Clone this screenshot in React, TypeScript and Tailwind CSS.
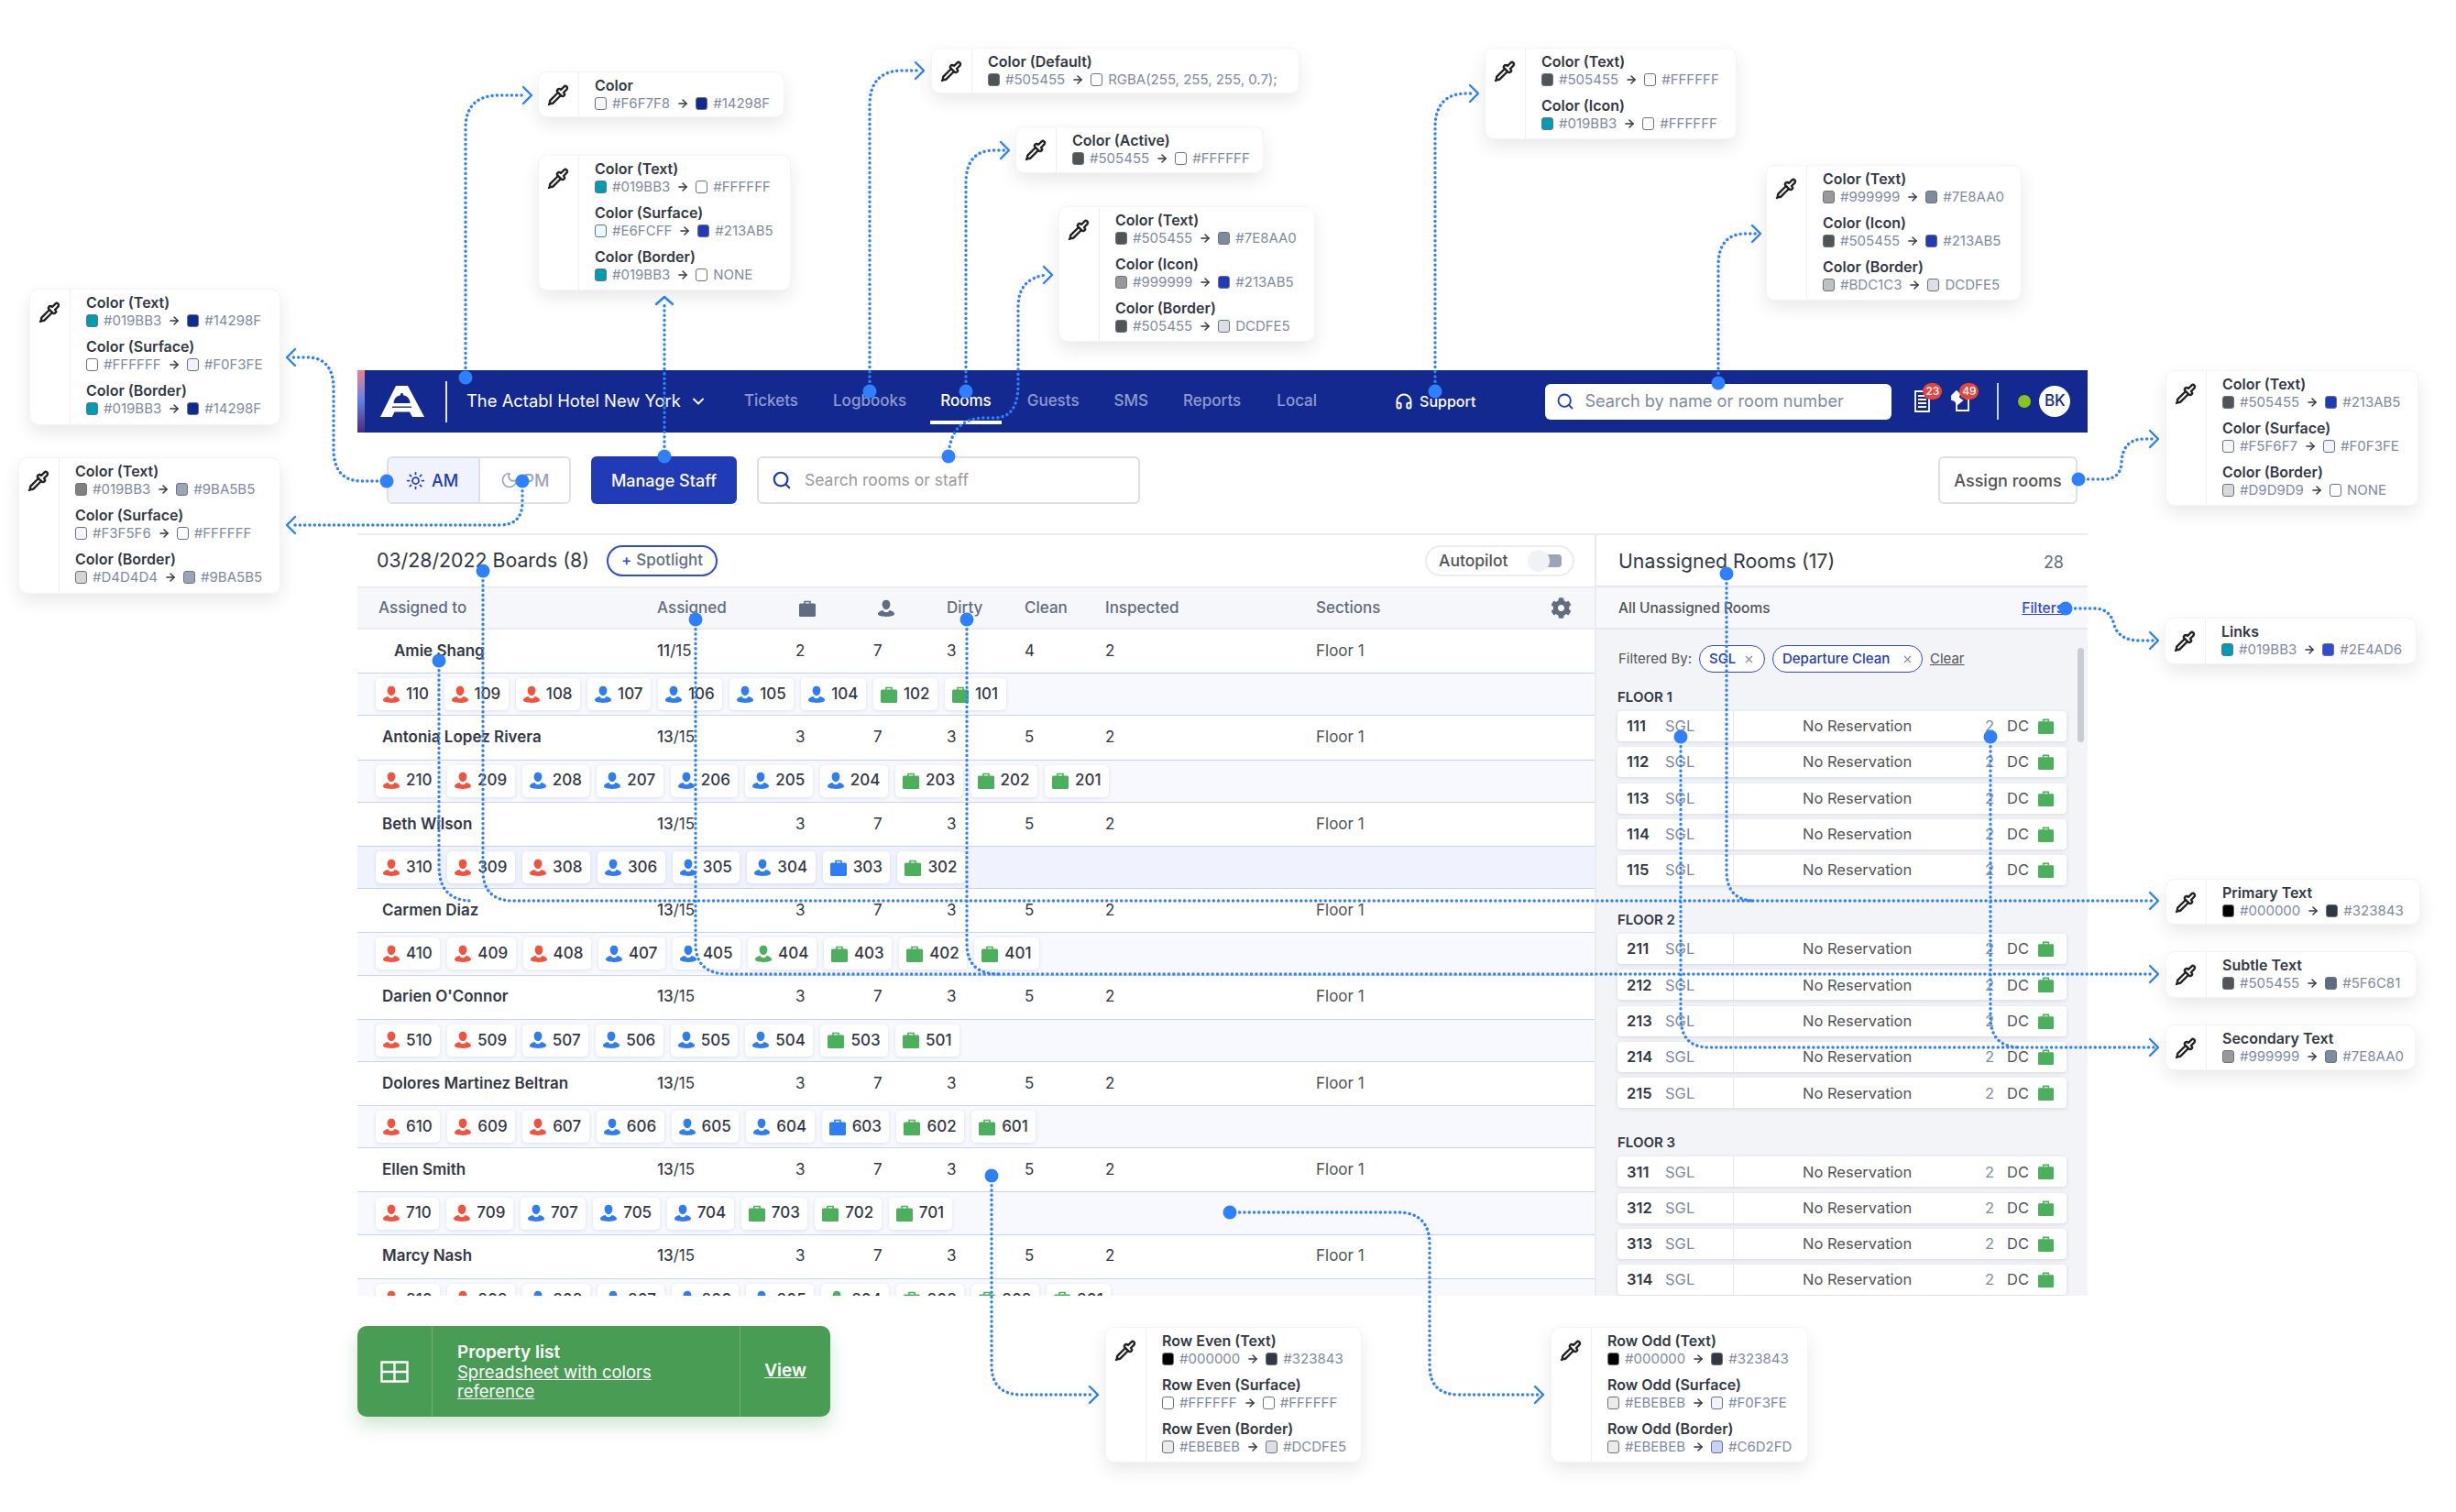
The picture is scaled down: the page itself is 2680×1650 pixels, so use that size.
import React from "react";
import { ArrowRight, Pipette, ChevronDown, Sun, Moon, Search, Headphones, X } from "lucide-react";
import { FaCog } from "react-icons/fa";

type Sw = [string, string];
type Sec = { t: string; a: Sw; b: Sw };

const Swatch = ({ c }: { c: string }) => (
  <span className="inline-block w-[13px] h-[14px] rounded-[3px] border border-[#6b7280] shrink-0" style={{ backgroundColor: c }} />
);

const Code = ({ s }: { s: Sw }) => (
  <span className="flex items-center gap-[6px]">
    <Swatch c={s[0]} />
    <span>{s[1]}</span>
  </span>
);

const Section = ({ s }: { s: Sec }) => (
  <div className="mb-[8px]">
    <div className="text-[16px] leading-[20px] font-semibold text-[#323843] whitespace-nowrap">{s.t}</div>
    <div className="flex items-center gap-[7px] text-[15px] leading-[20px] text-[#7e8aa0] whitespace-nowrap">
      <Code s={s.a} />
      <ArrowRight size={14} strokeWidth={2.5} className="text-[#323843] shrink-0" />
      <Code s={s.b} />
    </div>
  </div>
);

const Card = ({ cls, secs }: { cls: string; secs: Sec[] }) => (
  <div className={"absolute flex bg-white rounded-[10px] overflow-hidden border border-[#f4f4f5] shadow-[0_8px_20px_rgba(0,0,0,0.09)] " + cls}>
    <div className="w-[44px] shrink-0 border-r border-[#eeeeee] pt-[13px] pr-[2px] flex justify-center">
      <Pipette size={24} strokeWidth={2.4} className="text-[#222222]" />
    </div>
    <div className="pl-[17px] pt-[4px]">
      {secs.map((s) => (
        <Section key={s.t} s={s} />
      ))}
    </div>
  </div>
);

const W = "#FFFFFF";
const cards: { cls: string; secs: Sec[] }[] = [
  { cls: "left-[587px] top-[78px] w-[269px] h-[50px]", secs: [{ t: "Color", a: ["#F6F7F8", "#F6F7F8"], b: ["#14298F", "#14298F"] }] },
  {
    cls: "left-[587px] top-[169px] w-[276px] h-[148px]",
    secs: [
      { t: "Color (Text)", a: ["#019BB3", "#019BB3"], b: [W, "#FFFFFF"] },
      { t: "Color (Surface)", a: ["#E6FCFF", "#E6FCFF"], b: ["#213AB5", "#213AB5"] },
      { t: "Color (Border)", a: ["#019BB3", "#019BB3"], b: [W, "NONE"] },
    ],
  },
  {
    cls: "left-[32px] top-[315px] w-[274px] h-[149px]",
    secs: [
      { t: "Color (Text)", a: ["#019BB3", "#019BB3"], b: ["#14298F", "#14298F"] },
      { t: "Color (Surface)", a: [W, "#FFFFFF"], b: ["#F0F3FE", "#F0F3FE"] },
      { t: "Color (Border)", a: ["#019BB3", "#019BB3"], b: ["#14298F", "#14298F"] },
    ],
  },
  {
    cls: "left-[20px] top-[499px] w-[286px] h-[149px]",
    secs: [
      { t: "Color (Text)", a: ["#808080", "#019BB3"], b: ["#9BA5B5", "#9BA5B5"] },
      { t: "Color (Surface)", a: ["#F3F5F6", "#F3F5F6"], b: [W, "#FFFFFF"] },
      { t: "Color (Border)", a: ["#D4D4D4", "#D4D4D4"], b: ["#9BA5B5", "#9BA5B5"] },
    ],
  },
  { cls: "left-[1016px] top-[52px] w-[402px] h-[50px]", secs: [{ t: "Color (Default)", a: ["#505455", "#505455"], b: [W, "RGBA(255, 255, 255, 0.7);"] }] },
  { cls: "left-[1108px] top-[138px] w-[271px] h-[51px]", secs: [{ t: "Color (Active)", a: ["#505455", "#505455"], b: [W, "#FFFFFF"] }] },
  {
    cls: "left-[1155px] top-[225px] w-[280px] h-[148px]",
    secs: [
      { t: "Color (Text)", a: ["#505455", "#505455"], b: ["#7E8AA0", "#7E8AA0"] },
      { t: "Color (Icon)", a: ["#999999", "#999999"], b: ["#213AB5", "#213AB5"] },
      { t: "Color (Border)", a: ["#505455", "#505455"], b: ["#DCDFE5", "DCDFE5"] },
    ],
  },
  {
    cls: "left-[1620px] top-[52px] w-[275px] h-[100px]",
    secs: [
      { t: "Color (Text)", a: ["#505455", "#505455"], b: [W, "#FFFFFF"] },
      { t: "Color (Icon)", a: ["#019BB3", "#019BB3"], b: [W, "#FFFFFF"] },
    ],
  },
  {
    cls: "left-[1927px] top-[180px] w-[279px] h-[148px]",
    secs: [
      { t: "Color (Text)", a: ["#999999", "#999999"], b: ["#7E8AA0", "#7E8AA0"] },
      { t: "Color (Icon)", a: ["#505455", "#505455"], b: ["#213AB5", "#213AB5"] },
      { t: "Color (Border)", a: ["#BDC1C3", "#BDC1C3"], b: ["#DCDFE5", "DCDFE5"] },
    ],
  },
  {
    cls: "left-[2363px] top-[404px] w-[276px] h-[148px]",
    secs: [
      { t: "Color (Text)", a: ["#505455", "#505455"], b: ["#213AB5", "#213AB5"] },
      { t: "Color (Surface)", a: ["#F5F6F7", "#F5F6F7"], b: ["#F0F3FE", "#F0F3FE"] },
      { t: "Color (Border)", a: ["#D9D9D9", "#D9D9D9"], b: [W, "NONE"] },
    ],
  },
  { cls: "left-[2362px] top-[674px] w-[275px] h-[51px]", secs: [{ t: "Links", a: ["#019BB3", "#019BB3"], b: ["#2E4AD6", "#2E4AD6"] }] },
  { cls: "left-[2363px] top-[959px] w-[278px] h-[50px]", secs: [{ t: "Primary Text", a: ["#000000", "#000000"], b: ["#323843", "#323843"] }] },
  { cls: "left-[2363px] top-[1038px] w-[274px] h-[51px]", secs: [{ t: "Subtle Text", a: ["#505455", "#505455"], b: ["#5F6C81", "#5F6C81"] }] },
  { cls: "left-[2363px] top-[1118px] w-[273px] h-[50px]", secs: [{ t: "Secondary Text", a: ["#999999", "#999999"], b: ["#7E8AA0", "#7E8AA0"] }] },
  {
    cls: "left-[1206px] top-[1448px] w-[280px] h-[148px]",
    secs: [
      { t: "Row Even (Text)", a: ["#000000", "#000000"], b: ["#323843", "#323843"] },
      { t: "Row Even (Surface)", a: [W, "#FFFFFF"], b: [W, "#FFFFFF"] },
      { t: "Row Even (Border)", a: ["#EBEBEB", "#EBEBEB"], b: ["#DCDFE5", "#DCDFE5"] },
    ],
  },
  {
    cls: "left-[1692px] top-[1448px] w-[281px] h-[148px]",
    secs: [
      { t: "Row Odd (Text)", a: ["#000000", "#000000"], b: ["#323843", "#323843"] },
      { t: "Row Odd (Surface)", a: ["#EBEBEB", "#EBEBEB"], b: ["#F0F3FE", "#F0F3FE"] },
      { t: "Row Odd (Border)", a: ["#EBEBEB", "#EBEBEB"], b: ["#C6D2FD", "#C6D2FD"] },
    ],
  },
];

const Person = ({ c }: { c: string }) => (
  <svg width="20" height="20" viewBox="0 0 20 20" className="shrink-0" style={{ color: c }} fill="currentColor">
    <path d="M10 .8c2.600 0 4.400 2 4.400 4.600 0 2.200-1.600 5.600-4.400 5.600S5.600 7.600 5.600 5.400C5.600 2.800 7.400.8 10 .8z" />
    <path d="M1 16c0-2 2.600-3.400 5.600-3.900.6 1.400 1.800 2.200 3.400 2.200s2.800-.8 3.400-2.200c3 .5 5.600 1.900 5.600 3.900 0 1.800-4 2.900-9 2.900S1 17.800 1 16z" />
  </svg>
);

const Bag = ({ c, s = 20 }: { c: string; s?: number }) => (
  <svg width={s} height={s} viewBox="0 0 20 20" className="shrink-0" style={{ color: c }} fill="none">
    <path d="M7 5V2.500h6V5" stroke="currentColor" strokeWidth="1.600" />
    <rect x="1" y="4.500" width="18" height="14.500" rx="1.500" fill="currentColor" />
  </svg>
);

const RED = "#F2533E";
const BLUE = "#2F7DF2";
const GREEN = "#4CAF5C";

type Kind = "r" | "b" | "g" | "p" | "l";
const ChipIcon = ({ k }: { k: Kind }) => {
  if (k === "r") return <Person c={RED} />;
  if (k === "b") return <Person c={BLUE} />;
  if (k === "p") return <Person c={GREEN} />;
  if (k === "l") return <Bag c={BLUE} />;
  return <Bag c={GREEN} />;
};

const staff: { n: string; a: string; v: string[]; indent?: boolean; strong?: boolean; chips: [string, Kind][] }[] = [
  { n: "Amie Shang", a: "11", v: ["2", "7", "3", "4", "2"], indent: true, chips: [["110", "r"], ["109", "r"], ["108", "r"], ["107", "b"], ["106", "b"], ["105", "b"], ["104", "b"], ["102", "g"], ["101", "g"]] },
  { n: "Antonia Lopez Rivera", a: "13", v: ["3", "7", "3", "5", "2"], chips: [["210", "r"], ["209", "r"], ["208", "b"], ["207", "b"], ["206", "b"], ["205", "b"], ["204", "b"], ["203", "g"], ["202", "g"], ["201", "g"]] },
  { n: "Beth Wilson", a: "13", v: ["3", "7", "3", "5", "2"], strong: true, chips: [["310", "r"], ["309", "r"], ["308", "r"], ["306", "b"], ["305", "b"], ["304", "b"], ["303", "l"], ["302", "g"]] },
  { n: "Carmen Diaz", a: "13", v: ["3", "7", "3", "5", "2"], chips: [["410", "r"], ["409", "r"], ["408", "r"], ["407", "b"], ["405", "b"], ["404", "p"], ["403", "g"], ["402", "g"], ["401", "g"]] },
  { n: "Darien O'Connor", a: "13", v: ["3", "7", "3", "5", "2"], chips: [["510", "r"], ["509", "r"], ["507", "b"], ["506", "b"], ["505", "b"], ["504", "b"], ["503", "g"], ["501", "g"]] },
  { n: "Dolores Martinez Beltran", a: "13", v: ["3", "7", "3", "5", "2"], chips: [["610", "r"], ["609", "r"], ["607", "r"], ["606", "b"], ["605", "b"], ["604", "b"], ["603", "l"], ["602", "g"], ["601", "g"]] },
  { n: "Ellen Smith", a: "13", v: ["3", "7", "3", "5", "2"], chips: [["710", "r"], ["709", "r"], ["707", "b"], ["705", "b"], ["704", "b"], ["703", "g"], ["702", "g"], ["701", "g"]] },
  { n: "Marcy Nash", a: "13", v: ["3", "7", "3", "5", "2"], chips: [["810", "r"], ["809", "r"], ["808", "b"], ["807", "b"], ["806", "b"], ["805", "b"], ["804", "p"], ["803", "g"], ["802", "g"], ["801", "g"]] },
];

const COLS = "grid grid-cols-[327px_151px_85px_80px_85px_88px_230px_1fr] items-center";

const StaffRows = ({ s }: { s: (typeof staff)[number] }) => (
  <>
    <div className={COLS + " h-[47.2px] text-[17px] text-[#323843] bg-white"}>
      <div className={"font-semibold whitespace-nowrap " + (s.indent ? "pl-[40px]" : "pl-[27px]")}>{s.n}</div>
      <div>
        <span className="font-medium">{s.a}</span>/15
      </div>
      {s.v.map((x, i) => (
        <div key={i}>{x}</div>
      ))}
      <div className="text-[#505455]">Floor 1</div>
    </div>
    <div className={"h-[47.2px] flex items-center gap-[8px] pl-[20px] border-y border-[#c6d2fd] " + (s.strong ? "bg-[#f0f3fe]" : "bg-[#f8f9fe]")}>
      {s.chips.map(([r, k]) => (
        <div key={r} className="h-[35px] flex items-center gap-[6px] pl-[7px] pr-[8.5px] bg-white rounded-[5px] shadow-[0_1px_4px_rgba(30,50,120,0.13)] text-[17px] font-medium text-[#323843]">
          <ChipIcon k={k} />
          {r}
        </div>
      ))}
    </div>
  </>
);

const ListRow = ({ r }: { r: string }) => (
  <div className="h-[33px] w-[490px] flex items-center bg-white rounded-[4px] shadow-[0_1px_4px_rgba(30,40,80,0.14)] text-[16.5px]">
    <div className="w-[127px] h-full flex items-center pl-[10px] border-r border-[#e8e8ea]">
      <span className="w-[42px] font-semibold text-[#323843]">{r}</span>
      <span className="text-[#7e8aa0]">SGL</span>
    </div>
    <div className="pl-[75px] w-[274px] text-[#505455] whitespace-nowrap">No Reservation</div>
    <div className="w-[24px] text-[#7e8aa0]">2</div>
    <div className="w-[33px] text-[#505455]">DC</div>
    <Bag c={GREEN} s={19} />
  </div>
);

const Floor = ({ t, rooms }: { t: string; rooms: string[] }) => (
  <div className="mb-[28px]">
    <div className="h-[20px] leading-[20px] mb-[5px] text-[15px] font-semibold text-[#323843]">{t}</div>
    <div className="flex flex-col gap-[6.3px]">
      {rooms.map((r) => (
        <ListRow key={r} r={r} />
      ))}
    </div>
  </div>
);

const Logo = () => (
  <svg width="48" height="34" viewBox="0 0 48 34" className="ml-[17px] shrink-0">
    <path d="M17 0h13l18 34H35l-3-5.500H15.500L12.800 34H0z" fill="#fff" />
    <path d="M23.500 8c.9 0 1.500.6 1.500 1.500v.7c4.300.7 7.300 4 7.600 8.800H14.500c.3-4.800 3.300-8.100 7.500-8.800v-.7c0-.9.600-1.500 1.500-1.500z" fill="#14298f" />
    <path d="M13 22.500h21v1.500H13z" fill="#14298f" opacity="0.9" />
  </svg>
);

const NavItem = ({ t, active, cls }: { t: string; active?: boolean; cls: string }) => (
  <div className={"relative text-[17px] font-medium " + cls + (active ? " text-white" : " text-[#8e9ad0]")}>
    {t}
    {active && <div className="absolute left-[-11px] right-[-11px] top-[34px] h-[4px] bg-white" />}
  </div>
);

const Badge = ({ t }: { t: string }) => (
  <span className="absolute left-[10px] top-[-8px] w-[21px] h-[18px] rounded-full bg-[#e8443a] text-white text-[12px] leading-[18px] text-center font-medium">{t}</span>
);

type Arrow = "r" | "l" | "u";
const lines: { d: string; dot: [number, number][]; head?: [number, number, Arrow] }[] = [
  { d: "M508 412V140Q508 104 545 104H574", dot: [[508, 412]], head: [580, 104, "r"] },
  { d: "M725 498V332", dot: [[725, 498]], head: [725, 324, "u"] },
  { d: "M422 525H395Q364 525 364 490V425Q364 390 335 390H320", dot: [[422, 525]], head: [313, 390, "l"] },
  { d: "M570 525V548Q570 573 545 573H320", dot: [[570, 525]], head: [313, 573, "l"] },
  { d: "M949 427V115Q949 77 985 77H1003", dot: [[949, 427]], head: [1008, 77, "r"] },
  { d: "M1054 427V200Q1054 164 1085 164H1096", dot: [[1054, 427]], head: [1101, 164, "r"] },
  { d: "M1035 498Q1037 456 1075 456H1085Q1111 456 1111 420V335Q1111 303 1143 300", dot: [[1035, 498]], head: [1148, 300, "r"] },
  { d: "M1566 427V140Q1566 102 1600 102H1608", dot: [[1566, 427]], head: [1613, 102, "r"] },
  { d: "M1875 418V290Q1875 255 1905 255H1916", dot: [[1875, 418]], head: [1921, 255, "r"] },
  { d: "M2268 523H2295Q2314 523 2315 505Q2316 479 2340 479H2350", dot: [[2268, 523]], head: [2355, 479, "r"] },
  { d: "M2254 664H2285Q2303 664 2307 682Q2312 699 2335 699H2350", dot: [[2254, 664]], head: [2355, 699, "r"] },
  { d: "M527 623V950Q527 983 560 983H2350M479 721V945Q479 983 515 983M1884 626V950Q1884 983 1915 983", dot: [[527, 623], [479, 721], [1884, 626]], head: [2355, 983, "r"] },
  { d: "M759 676V1030Q759 1063 795 1063H2350M1055 676V1030Q1055 1063 1090 1063", dot: [[759, 676], [1055, 676]], head: [2355, 1063, "r"] },
  { d: "M1834 804V1110Q1834 1143 1865 1143H2350M2172 804V1110Q2172 1143 2205 1143", dot: [[1834, 804], [2172, 804]], head: [2355, 1143, "r"] },
  { d: "M1082 1283V1490Q1082 1522 1115 1522H1193", dot: [[1082, 1283]], head: [1198, 1522, "r"] },
  { d: "M1342 1323H1525Q1560 1323 1560 1358V1490Q1560 1522 1592 1522H1679", dot: [[1342, 1323]], head: [1684, 1522, "r"] },
];

const Head = ({ x, y, a }: { x: number; y: number; a: Arrow }) => {
  const d =
    a === "r"
      ? `M${x - 9} ${y - 9}L${x} ${y}L${x - 9} ${y + 9}`
      : a === "l"
      ? `M${x + 9} ${y - 9}L${x} ${y}L${x + 9} ${y + 9}`
      : `M${x - 9} ${y + 8}L${x} ${y}L${x + 9} ${y + 8}`;
  return <path d={d} fill="none" stroke="#2F80FF" strokeWidth="2.400" strokeLinecap="round" strokeLinejoin="round" />;
};

export default function App() {
  return (
    <div className="relative w-[2680px] h-[1650px] overflow-hidden bg-white pt-[404px] pl-[390px] font-[family-name:Inter,sans-serif]">
      <div className="w-[1888px]">
        {/* Nav */}
        <div className="h-[68px] bg-[#14298f] flex items-center">
          <div className="w-[8px] self-stretch shrink-0 bg-gradient-to-b from-[#e8808c] via-[#5f7ee0] to-[#4a2a80]" />
          <Logo />
          <div className="w-[2px] h-[45px] bg-[#dfe3f5] ml-[23px] mr-[21px] shrink-0" />
          <div className="text-[18.4px] text-white whitespace-nowrap">The Actabl Hotel New York</div>
          <ChevronDown size={20} strokeWidth={2.2} className="text-white ml-[9px]" />
          <NavItem t="Tickets" cls="ml-[40px]" />
          <NavItem t="Logbooks" cls="ml-[38px]" />
          <NavItem t="Rooms" active cls="ml-[37px]" />
          <NavItem t="Guests" cls="ml-[39px]" />
          <NavItem t="SMS" cls="ml-[38px]" />
          <NavItem t="Reports" cls="ml-[38px]" />
          <NavItem t="Local" cls="ml-[39px]" />
          <Headphones size={20} strokeWidth={2.4} className="text-white ml-[85px]" />
          <div className="ml-[7px] text-[16px] text-white font-medium">Support</div>
          <div className="ml-[76px] w-[378px] h-[39px] rounded-[6px] bg-white flex items-center pl-[12px] text-[18.2px] text-[#7e8aa0] whitespace-nowrap">
            <Search size={20} strokeWidth={2.2} className="text-[#213ab5] mr-[11px]" />
            Search by name or room number
          </div>
          <div className="relative ml-[24px] w-[20px] h-[24px]">
            <svg width="20" height="24" viewBox="0 0 20 24" fill="none" stroke="#fff" strokeWidth="1.800">
              <path d="M2 1h15v22H2zM5 6h9M5 10h9M5 14h9M5 18h9" />
            </svg>
            <Badge t="23" />
          </div>
          <div className="relative ml-[20px] w-[22px] h-[24px]">
            <svg width="22" height="24" viewBox="0 0 22 24" fill="none" stroke="#fff" strokeWidth="1.800">
              <path d="M7 9v13h13V9h-3" />
              <path d="M2 6l5-5 3 3-1 4 4 3-5 4-3-4-3-1z" fill="#fff" />
            </svg>
            <Badge t="49" />
          </div>
          <div className="w-[2px] h-[40px] bg-[#c6d2fd] ml-[29px]" />
          <div className="w-[14px] h-[14px] rounded-full bg-[#8cc21e] ml-[21px]" />
          <div className="w-[34px] h-[34px] rounded-full bg-white ml-[9px] flex items-center justify-center text-[#14298f] text-[17px] font-medium">BK</div>
        </div>

        {/* Toolbar */}
        <div className="h-[112px] pt-[26px] pl-[32px] pr-[11px] flex items-start border-b-2 border-[#ececee]">
          <div className="w-[201px] h-[52px] flex rounded-[6px] border-2 border-[#dcdfe5] overflow-hidden text-[18px] font-medium">
            <div className="w-[100px] bg-[#f0f3fe] text-[#213ab5] flex items-center justify-center gap-[7px] pr-[3px] border-r-2 border-[#dcdfe5]">
              <Sun size={21} strokeWidth={2} />
              AM
            </div>
            <div className="flex-1 text-[#9ba5b5] flex items-center justify-center gap-[6px]">
              <Moon size={20} strokeWidth={2} />
              PM
            </div>
          </div>
          <div className="ml-[22px] w-[159px] h-[52px] rounded-[6px] bg-[#213ab5] text-white text-[18px] font-medium flex items-center justify-center">Manage Staff</div>
          <div className="ml-[22px] w-[418px] h-[52px] rounded-[6px] border-2 border-[#dcdfe5] flex items-center pl-[14px] text-[17.5px] text-[#999999]">
            <Search size={22} strokeWidth={2.4} className="text-[#213ab5] mr-[14px]" />
            Search rooms or staff
          </div>
          <div className="ml-auto w-[152px] h-[52px] rounded-[6px] border-2 border-[#dcdfe5] flex items-center justify-center text-[18px] text-[#505455] font-medium">Assign rooms</div>
        </div>

        {/* Main */}
        <div className="h-[830px] flex overflow-hidden">
          {/* Boards */}
          <div className="w-[1350px] shrink-0">
            <div className="h-[56px] flex items-center pl-[21px] pr-[22px]">
              <div className="text-[21.3px] text-[#323843] whitespace-nowrap">03/28/2022 Boards (8)</div>
              <div className="ml-[19px] w-[121px] h-[34px] rounded-full border-2 border-[#2e4ad6] flex items-center justify-center text-[17px] font-medium text-[#5f6c81]">
                <span className="text-[#2e4ad6] mr-[5px]">+</span>Spotlight
              </div>
              <div className="ml-auto w-[163px] h-[34px] rounded-full border-2 border-[#ececee] flex items-center pl-[13px] text-[17.5px] font-medium text-[#505455]">
                Autopilot
                <div className="relative ml-[26px] w-[33px] h-[14px] rounded-[4px] bg-[#9ba5b5]">
                  <div className="absolute left-[-4px] top-[-5px] w-[24px] h-[24px] rounded-full bg-[#f1f2f5]" />
                </div>
              </div>
            </div>
            <div className={COLS + " h-[47px] bg-[#f6f7fb] border-y-2 border-[#ececee] text-[17px] font-medium text-[#5f6c81]"}>
              <div className="pl-[23px]">Assigned to</div>
              <div>Assigned</div>
              <div className="pl-[3px]">
                <Bag c="#5F6C81" />
              </div>
              <div className="pl-[4px]">
                <Person c="#5F6C81" />
              </div>
              <div>Dirty</div>
              <div>Clean</div>
              <div>Inspected</div>
              <div className="flex items-center justify-between pr-[25px]">
                Sections
                <FaCog size={23} className="text-[#5f6c81]" />
              </div>
            </div>
            {staff.map((s) => (
              <StaffRows key={s.n} s={s} />
            ))}
          </div>

          {/* Unassigned */}
          <div className="flex-1 flex flex-col border-l-2 border-[#ececee]">
            <div className="h-[57px] shrink-0 flex items-center pl-[24px] pr-[26px] pt-[3px] border-b-2 border-[#e6e7ec]">
              <div className="text-[21.3px] text-[#323843] whitespace-nowrap">Unassigned Rooms (17)</div>
              <div className="ml-auto text-[18px] text-[#5f6c81]">28</div>
            </div>
            <div className="h-[46px] shrink-0 flex items-center pl-[24px] pr-[26px] pt-[2px] bg-[#f7f8fb] border-b-2 border-[#e6e7ec] text-[15.5px] font-medium text-[#505455]">
              All Unassigned Rooms
              <span className="ml-auto underline text-[#2e4ad6]">Filters</span>
            </div>
            <div className="relative flex-1 bg-[#f3f4f8] pl-[23px] pt-[17px]">
              <div className="absolute right-[4px] top-[20px] w-[7px] h-[103px] rounded-full bg-[#c9ccd3]" />
              <div className="flex items-center h-[30px] mb-[17px] text-[15px]">
                <span className="ml-[1px] text-[#505455] whitespace-nowrap">Filtered By:</span>
                <span className="ml-[8px] w-[72px] h-[30px] rounded-full border border-[#2e4ad6] bg-white flex items-center pl-[10px] text-[#213ab5] font-medium">
                  SGL
                  <X size={13} className="ml-auto mr-[10px] text-[#7e8aa0]" />
                </span>
                <span className="ml-[8px] w-[164px] h-[30px] rounded-full border border-[#2e4ad6] bg-white flex items-center pl-[10px] text-[#213ab5] font-medium whitespace-nowrap">
                  Departure Clean
                  <X size={13} className="ml-auto mr-[9px] text-[#7e8aa0]" />
                </span>
                <span className="ml-[8px] underline text-[#505455]">Clear</span>
              </div>
              <Floor t="FLOOR 1" rooms={["111", "112", "113", "114", "115"]} />
              <Floor t="FLOOR 2" rooms={["211", "212", "213", "214", "215"]} />
              <Floor t="FLOOR 3" rooms={["311", "312", "313", "314", "315"]} />
            </div>
          </div>
        </div>

        {/* Property list */}
        <div className="mt-[33px] w-[516px] h-[99px] flex rounded-[10px] bg-[#489c54] text-white shadow-[0_10px_20px_rgba(72,156,84,0.25)]">
          <div className="w-[82px] shrink-0 flex items-center justify-center border-r border-[#6fb37a]">
            <svg width="31" height="24" viewBox="0 0 31 24" fill="none" stroke="#fff" strokeWidth="2.400">
              <path d="M1.500 1.500h28v21h-28zM1.500 12h28M15.500 1.500v21" />
            </svg>
          </div>
          <div className="w-[336px] shrink-0 pl-[27px] pt-[17px] border-r border-[#6fb37a]">
            <div className="text-[19px] font-semibold leading-[23px]">Property list</div>
            <div className="text-[18.500px] leading-[21px] underline w-[260px]">Spreadsheet with colors reference</div>
          </div>
          <div className="flex-1 flex items-center justify-center text-[19px] font-semibold underline">View</div>
        </div>
      </div>

      {/* Annotation layer */}
      <svg width="2680" height="1650" viewBox="0 0 2680 1650" className="absolute left-0 top-0 pointer-events-none">
        {lines.map((l, i) => (
          <g key={i}>
            <path d={l.d} fill="none" stroke="#2F80FF" strokeWidth="3.400" strokeLinecap="round" strokeDasharray="0.1 5.2" />
            {l.dot.map(([x, y]) => (
              <circle key={x + "-" + y} cx={x} cy={y} r="7.500" fill="#2F80FF" />
            ))}
            {l.head && <Head x={l.head[0]} y={l.head[1]} a={l.head[2]} />}
          </g>
        ))}
      </svg>
      {cards.map((c) => (
        <Card key={c.cls} cls={c.cls} secs={c.secs} />
      ))}
    </div>
  );
}
